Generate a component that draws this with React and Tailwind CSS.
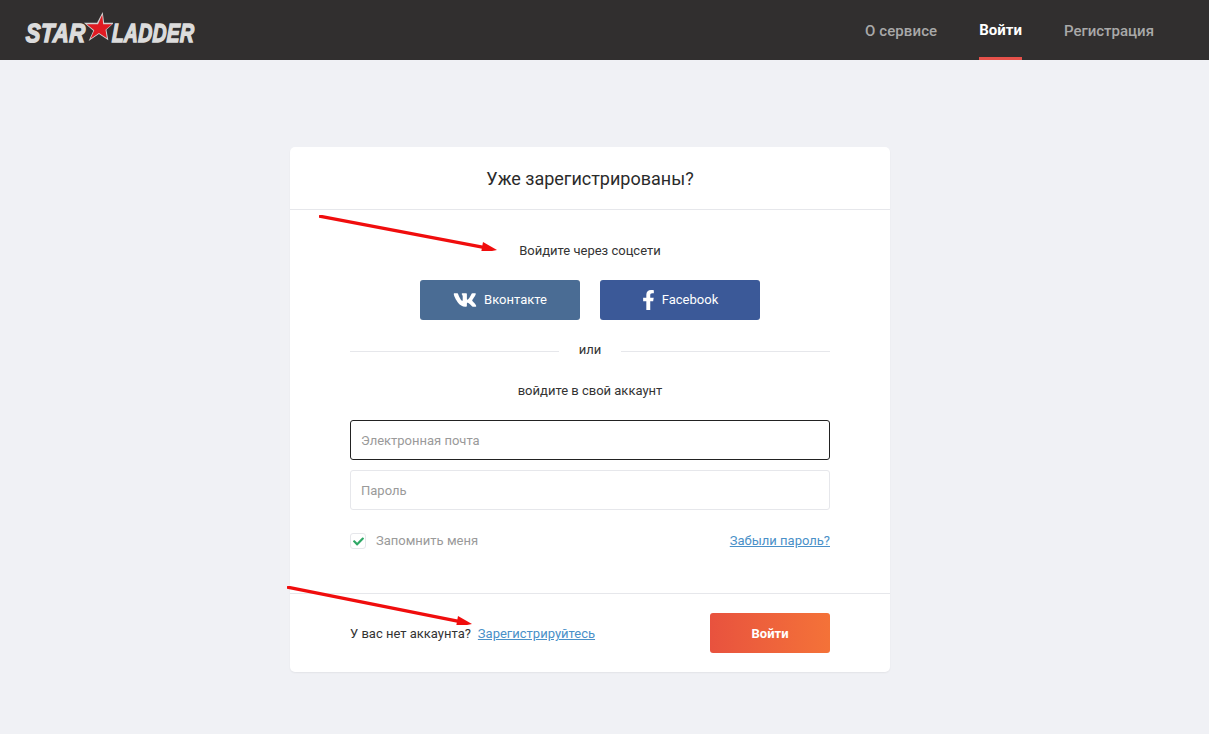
import React from "react";
import { FaVk, FaFacebookF, FaCheck } from "react-icons/fa";

const Arrow = ({ className, w, h }) => (
  <svg className={className} width={w} height={h} viewBox={`0 0 ${w} ${h}`}>
    <line x1="0" y1="1" x2={w - 12} y2={h - 3.4} stroke="#f00d0d" strokeWidth="3.2" />
    <polygon
      points={`${w},${h - 1} ${w - 16},${h - 1 + 3.2} ${w - 14},${h - 1 - 8}`}
      fill="#f00d0d"
    />
  </svg>
);

const Logo = () => (
  <div className="flex h-[60px] w-[172px] items-center pt-[5px] font-['Liberation_Sans',sans-serif] text-[26px] font-bold italic leading-none text-[#dcdcdc]">
    <span className="w-[57px] origin-left -skew-x-3 scale-x-[0.84] tracking-[0.5px] [-webkit-text-stroke:1.5px_#dcdcdc]">STAR</span>
    <svg className="mt-[-12px] shrink-0" width="30" height="34" viewBox="0 0 32 34">
      <polygon
        points="21,1 22.5,12.5 33,12.5 25,20 27,31 17,24.5 6,32 11,21 1,12.5 15,12.5"
        fill="#d3d3d3"
      />
      <polygon
        points="20.5,4 21.5,14 31,14 24,20 25.5,29 17,23.5 8,29.5 12,20.5 4,14 16,14"
        fill="#e01b22"
      />
    </svg>
    <span className="ml-[-1px] w-[84px] origin-left -skew-x-3 scale-x-[0.74] tracking-[0.5px] [-webkit-text-stroke:1.5px_#dcdcdc]">LADDER</span>
  </div>
);

const App = () => {
  return (
    <div className="relative h-[734px] overflow-hidden bg-[#f0f1f5] font-['Roboto',sans-serif] text-[#333]">
      <header className="flex h-[60px] items-center justify-between bg-[#312f2f] pl-[26px] pr-[55px]">
        <Logo />
        <nav className="flex h-full gap-[42px] text-[15px] font-medium text-[#a9a9a9]">
          <a className="flex items-center pt-[3px] tracking-[0.1px]">О сервисе</a>
          <a className="flex items-center border-b-[3px] border-[#e6514a] pt-[3px] font-bold text-white">
            Войти
          </a>
          <a className="flex items-center pt-[3px]">Регистрация</a>
        </nav>
      </header>

      <div className="w-[1180px]">
        <main className="mx-auto mt-[87px] w-[600px] rounded-[5px] bg-white shadow-[0_1px_2px_rgba(0,0,0,0.06)]">
          <div className="flex h-[63px] items-center justify-center border-b border-[#e6e7eb] text-[18px] text-[#2b2b2b]">
            Уже зарегистрированы?
          </div>

          <div className="flex h-[383px] flex-col items-center px-[60px] text-[13px]">
            <p className="mt-[31px] leading-[20px]">Войдите через соцсети</p>

            <div className="mt-[19px] flex gap-[20px] text-[13px] text-white">
              <button className="flex h-[40px] w-[160px] items-center justify-center gap-[7px] rounded-[3px] bg-[#4a6c94]">
                <FaVk className="text-[24px]" />
                Вконтакте
              </button>
              <button className="flex h-[40px] w-[160px] items-center justify-center gap-[7px] rounded-[3px] bg-[#3b5998]">
                <FaFacebookF className="h-[20px] w-[13px]" />
                Facebook
              </button>
            </div>

            <div className="mt-[20px] flex w-full items-center gap-[20px] leading-[20px]">
              <div className="mt-[2px] h-px flex-1 bg-[#e6e7eb]" />
              <span>или</span>
              <div className="mt-[2px] h-px flex-1 bg-[#e6e7eb]" />
            </div>

            <p className="mt-[21px] leading-[20px]">войдите в свой аккаунт</p>

            <input
              className="mt-[19px] h-[40px] w-full rounded-[3px] border border-[#222] bg-white px-[10px] text-[13px] outline-none placeholder:text-[#9a9a9a]"
              placeholder="Электронная почта"
            />
            <input
              className="mt-[10px] h-[40px] w-full rounded-[3px] border border-[#e6e7eb] bg-white px-[10px] text-[13px] outline-none placeholder:text-[#9a9a9a]"
              placeholder="Пароль"
            />

            <div className="mt-[21px] flex h-[20px] w-full items-center justify-between">
              <label className="flex items-center gap-[10px] text-[#9a9a9a]">
                <span className="flex h-[16px] w-[16px] items-center justify-center rounded-[3px] border border-[#e6e7eb]">
                  <FaCheck className="text-[11px] text-[#2fa866]" />
                </span>
                Запомнить меня
              </label>
              <a className="text-[#4a90c8] underline">Забыли пароль?</a>
            </div>
          </div>

          <div className="flex h-[79px] items-center justify-between border-t border-[#e6e7eb] px-[60px] text-[13px]">
            <p className="pt-[2px]">
              У вас нет аккаунта?
              <a className="ml-[7px] text-[#4a90c8] underline">Зарегистрируйтесь</a>
            </p>
            <button className="h-[40px] w-[120px] rounded-[3px] bg-gradient-to-r from-[#e8523e] to-[#f47238] pt-px text-[13px] font-bold text-white">
              Войти
            </button>
          </div>
        </main>
      </div>

      <Arrow className="absolute left-[319px] top-[215px]" w={178} h={36} />
      <Arrow className="absolute left-[287px] top-[586px]" w={185} h={39} />
    </div>
  );
};

export default App;
